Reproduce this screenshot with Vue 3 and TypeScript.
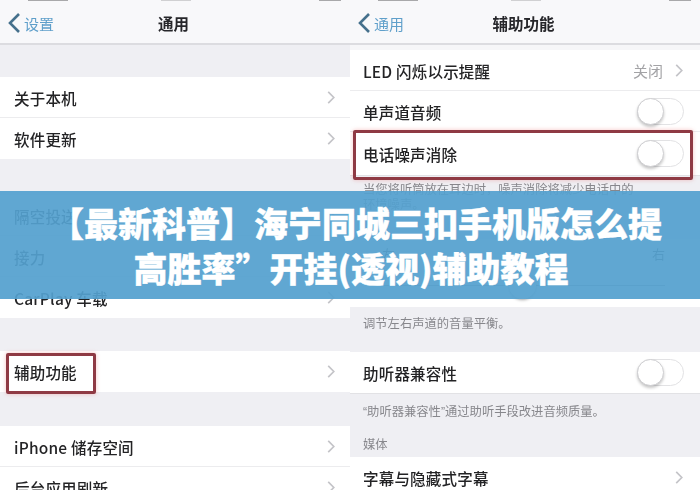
<script setup lang="ts">
const generalGroups = [
  { height: 32, rows: ['关于本机', '软件更新'] },
  { height: 36, rows: ['隔空投送', '接力', 'CarPlay 车载'] },
  { height: 33, rows: ['辅助功能'], marked: true },
  { height: 34, rows: ['iPhone 储存空间', '后台应用刷新'] },
]
</script>

<template>
  <div class="page">
    <section class="phone">
      <div class="status"><i class="carrier"></i><i class="clock"></i><i class="battery"></i></div>
      <header class="nav">
        <svg class="back" viewBox="0 0 14 22"><path d="M12 2 3 11l9 9" /></svg>
        <span class="back-label">设置</span>
        <strong class="nav-title">通用</strong>
      </header>
      <template v-for="group in generalGroups" :key="group.rows[0]">
        <div class="gap" :style="{ height: group.height + 'px' }"></div>
        <div class="group">
          <div v-for="row in group.rows" :key="row" class="row">
            <span class="label">{{ row }}</span>
            <svg class="chevron" viewBox="0 0 8 14"><path d="M1 1l6 6-6 6" /></svg>
            <i v-if="group.marked" class="mark mark-left"></i>
          </div>
        </div>
      </template>
    </section>

    <section class="phone second">
      <div class="status"><i class="carrier"></i><i class="clock"></i><i class="battery"></i></div>
      <header class="nav">
        <svg class="back" viewBox="0 0 14 22"><path d="M12 2 3 11l9 9" /></svg>
        <span class="back-label">通用</span>
        <strong class="nav-title">辅助功能</strong>
      </header>
      <div class="gap thin"></div>
      <div class="group">
        <div class="row">
          <span class="label">LED 闪烁以示提醒</span>
          <span class="value">关闭</span>
          <svg class="chevron" viewBox="0 0 8 14"><path d="M1 1l6 6-6 6" /></svg>
        </div>
        <div class="row">
          <span class="label">单声道音频</span>
          <span class="toggle"></span>
        </div>
        <div class="row tall">
          <span class="label">电话噪声消除</span>
          <span class="toggle"></span>
          <i class="mark mark-wide"></i>
        </div>
      </div>
      <div class="note first-note">
        <p>当您将听筒放在耳边时，噪声消除将减少电话中的</p>
        <p>环境噪声。</p>
      </div>
      <div class="balance">
        <div class="ends"><span>左</span><span>右</span></div>
        <div class="track"><span class="knob"></span></div>
      </div>
      <div class="note balance-note"><p>调节左右声道的音量平衡。</p></div>
      <div class="group">
        <div class="row">
          <span class="label">助听器兼容性</span>
          <span class="toggle"></span>
        </div>
      </div>
      <div class="note hearing-note">
        <p><span class="quote">“</span>助听器兼容性<span class="quote">”</span>通过助听手段改进音频质量。</p>
        <p class="media">媒体</p>
      </div>
      <div class="group">
        <div class="row">
          <span class="label">字幕与隐藏式字幕</span>
          <svg class="chevron" viewBox="0 0 8 14"><path d="M1 1l6 6-6 6" /></svg>
        </div>
      </div>
    </section>

    <div class="banner">
      <h1>
        <span class="line-one">【最新科普】海宁同城三扣手机版怎么提</span>
        <span class="line-two">高胜率”开挂(透视)辅助教程</span>
      </h1>
    </div>
  </div>
</template>

<style scoped>
.page {
  position: relative;
  display: flex;
  width: 700px;
  height: 490px;
  overflow: hidden;
  background: #efeff3;
  font-family: "Noto Sans CJK SC", "Noto Sans", sans-serif;
  color: #232325;
}

.phone {
  flex: 0 0 350px;
  height: 490px;
  overflow: hidden;
  background: #efeff3;
  filter: blur(0.5px);
}

.status {
  display: flex;
  height: 3px;
  background: #f8f8fa;
}

.status i {
  display: block;
  height: 1px;
  background: #a8a8aa;
}

.carrier {
  width: 40px;
  margin-left: 28px;
}

.clock {
  width: 30px;
  margin-left: 93px;
  opacity: 0.5;
}

.battery {
  width: 22px;
  margin-left: 128px;
}

.nav {
  position: relative;
  display: flex;
  align-items: center;
  height: 40px;
  padding-left: 7px;
  background: #f8f8fa;
  border-bottom: 2px solid #dcdce0;
}

.back {
  width: 14px;
  height: 22px;
  fill: none;
  stroke: #45708c;
  stroke-width: 2.6;
}

.back-label {
  margin-left: 3px;
  font-size: 15px;
  color: #5f9fca;
}

.nav-title {
  position: absolute;
  top: 0;
  left: -3px;
  right: 0;
  text-align: center;
  font-size: 15.5px;
  font-weight: 700;
  line-height: 40px;
  color: #26262a;
}

.gap {
  background: #efeff3;
}

.gap.thin {
  height: 5px;
  background: #f6f6f8;
}

.group {
  background: #fff;
  box-shadow: 0 1px 0 #e2e2e5;
}

.row {
  position: relative;
  display: flex;
  align-items: center;
  height: 41px;
  padding: 0 15px 0 14px;
  box-shadow: inset 0 -1px 0 #ececee;
}

.row:last-child {
  box-shadow: none;
}

.row.tall {
  height: 43px;
}

.label {
  flex: 1;
  font-size: 15.5px;
  font-weight: 500;
  letter-spacing: 0.2px;
}

.second .row {
  padding: 0 17px 0 13px;
}

.value {
  margin-right: 12px;
  font-size: 15px;
  color: #a3a3a6;
}

.chevron {
  width: 8px;
  height: 13px;
  fill: none;
  stroke: #c4c4c8;
  stroke-width: 1.8;
}

.toggle {
  position: relative;
  width: 47px;
  height: 27px;
  margin-right: -1px;
  border: 1px solid #e2e2e4;
  border-radius: 14px;
  box-sizing: border-box;
  background: #fff;
}

.toggle::before {
  content: "";
  position: absolute;
  top: -1px;
  left: -1px;
  width: 27px;
  height: 27px;
  border: 1px solid #cfcfd2;
  border-radius: 50%;
  box-sizing: border-box;
  background: #fff;
  box-shadow: 0 2px 3px rgba(0, 0, 0, 0.22);
}

.mark {
  position: absolute;
  border: 3px solid #8f3a44;
  border-radius: 2px;
  box-shadow: 0 0 4px rgba(230, 90, 90, 0.35);
  pointer-events: none;
}

.mark-left {
  top: 2px;
  left: 6px;
  width: 84px;
  height: 35px;
}

.mark-wide {
  top: -2px;
  left: 3px;
  right: 7px;
  height: 44px;
}

.note {
  padding: 0 13px;
  font-size: 12.3px;
  color: #87878c;
}

.note p {
  margin: 0;
  line-height: 15px;
}

.quote {
  font-family: "Liberation Sans", sans-serif;
}

.first-note {
  height: 64px;
  padding-top: 7px;
  box-sizing: border-box;
}

.balance {
  height: 68px;
  padding: 6px 35px 0 32px;
  box-sizing: border-box;
  background: #fff;
}

.ends {
  display: flex;
  justify-content: space-between;
  font-size: 13px;
  line-height: 18px;
  color: #444;
}

.track {
  position: relative;
  height: 1px;
  margin-top: 22px;
  background: #a9a9ad;
}

.knob {
  position: absolute;
  top: -13px;
  left: 127px;
  width: 27px;
  height: 27px;
  border-radius: 50%;
  background: #fff;
  box-shadow: 0 1px 3px rgba(0, 0, 0, 0.35);
}

.balance-note {
  height: 45px;
  padding-top: 9px;
  box-sizing: border-box;
}

.hearing-note {
  height: 64px;
  padding-top: 11px;
  box-sizing: border-box;
}

.media {
  margin-top: 17px !important;
}

.banner {
  position: absolute;
  top: 191px;
  left: 0;
  right: 0;
  display: flex;
  align-items: center;
  justify-content: center;
  height: 108px;
  background: rgba(84, 160, 207, 0.93);
}

.banner h1 {
  margin: 0;
  font-size: 34px;
  font-weight: 900;
  line-height: 45px;
  text-align: center;
  white-space: nowrap;
  color: #fff;
  -webkit-text-stroke: 0.4px #fff;
}

.line-one,
.line-two {
  display: block;
}

.line-one {
  padding-left: 12px;
}

.line-two {
  padding-left: 2px;
}
</style>
